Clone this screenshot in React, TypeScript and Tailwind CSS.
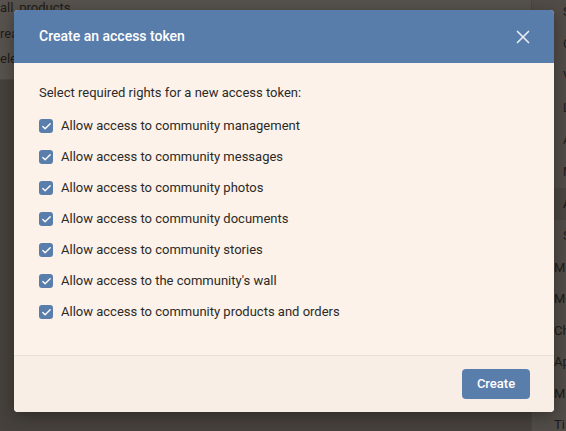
import { X, Check } from 'lucide-react'

const rights = [
  'Allow access to community management',
  'Allow access to community messages',
  'Allow access to community photos',
  'Allow access to community documents',
  'Allow access to community stories',
  "Allow access to the community's wall",
  'Allow access to community products and orders',
]

const subItems = ['S', 'C', 'V', 'L', 'A', 'M', 'A', 'S']
const mainItems = ['M', 'M', 'Ch', 'Ap', 'M', 'Ti']

function Background() {
  return (
    <div className="absolute inset-0 flex bg-[#46413c] text-[13px] text-[#1f1c19]">
      <div className="flex-1">
        <div className="h-[80px] bg-[#57524d] border-b border-[#4d4843] leading-[25.5px] overflow-hidden">
          <p className="-mt-[5px]">all, products</p>
          <p>reate an access token</p>
          <p>elect</p>
        </div>
      </div>
      <div className="w-[35px] bg-[#514c47] border-l border-[#4a4540] flex flex-col -mt-[4px] overflow-hidden whitespace-nowrap">
        {subItems.map((item, i) => (
          <div
            key={i}
            className={`h-[32px] shrink-0 flex items-center pl-[31px] ${i === 6 ? 'bg-[#4a4540] text-[#171411]' : ''}`}
          >
            {item}
          </div>
        ))}
        {mainItems.map((item, i) => (
          <div key={i} className="h-[31.4px] shrink-0 flex items-center pl-[22px]">
            {item}
          </div>
        ))}
      </div>
    </div>
  )
}

export default function App() {
  return (
    <div
      className="relative w-[566px] h-[431px] overflow-hidden"
      style={{ fontFamily: 'Roboto, "Open Sans", sans-serif' }}
    >
      <Background />
      <div className="absolute left-[14px] top-[10px] w-[540px] rounded-[4px] overflow-hidden bg-[#fcf2e9] shadow-[0_4px_16px_rgba(0,0,0,0.35)]">
        <div className="h-[53px] bg-[#597dab] flex items-center justify-between pl-[25px] pr-[20px]">
          <h2 className="text-[14px] font-medium text-white">
            Create an access token
          </h2>
          <X className="size-[22px] text-[#e8eef6]" strokeWidth={1.8} />
        </div>
        <div className="pl-[25px] pt-[20px] pb-[33px] text-[13px] text-[#2b2a28]">
          <p className="h-[20px] leading-[20px]">
            Select required rights for a new access token:
          </p>
          <ul className="mt-[13px] flex flex-col gap-[11px]">
            {rights.map((right) => (
              <li key={right} className="h-[20px] flex items-center gap-[8px]">
                <span className="size-[14px] rounded-[3px] bg-[#5a7eab] flex items-center justify-center">
                  <Check className="size-[11px] text-white" strokeWidth={3} />
                </span>
                <span className="leading-[20px]">{right}</span>
              </li>
            ))}
          </ul>
        </div>
        <div className="border-t border-[#e9e0d7] bg-[#f8eee5] h-[57px] flex items-center justify-end pr-[24px]">
          <button className="h-[30px] w-[68px] rounded-[4px] bg-[#5a7eab] text-white text-[13px] font-medium">
            Create
          </button>
        </div>
      </div>
    </div>
  )
}
